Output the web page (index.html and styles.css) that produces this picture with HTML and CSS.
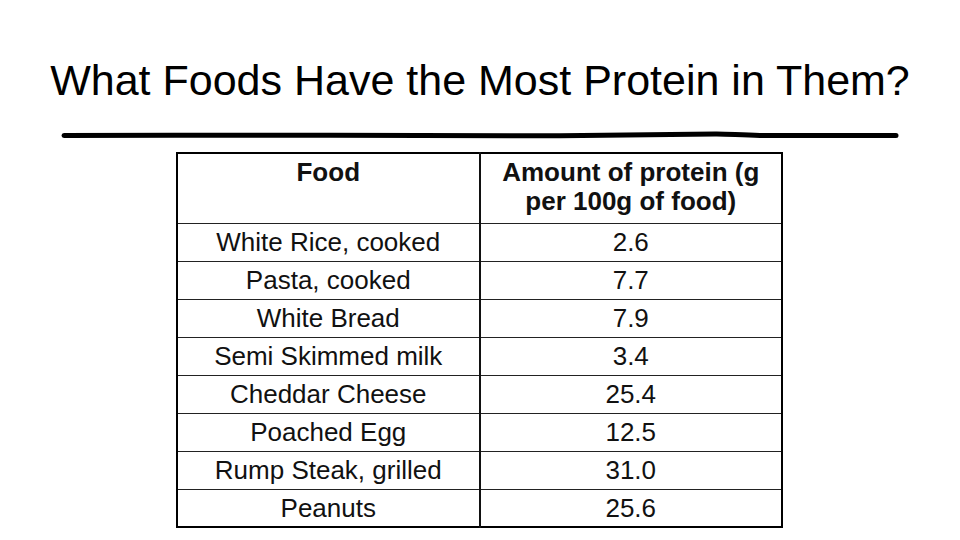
FILE: index.html
```html
<!DOCTYPE html>
<html>
<head>
<meta charset="utf-8">
<link rel="stylesheet" href="styles.css">
</head>
<body>
<div class="slide">
  <h1 class="title">What Foods Have the Most Protein in Them?</h1>
  <svg class="rule" width="960" height="16" viewBox="0 0 960 16">
    <path d="M64 8.5 C150 8 250 8.6 330 8.3 C420 8 500 9.2 560 8.8 C620 8.4 680 7.6 715 7 C728 6.8 740 8.2 760 8.4 C820 8.6 870 8.2 896 8.4" fill="none" stroke="#000" stroke-width="5" stroke-linecap="round"/>
  </svg>
  <table class="data">
    <thead>
      <tr><th>Food</th><th>Amount of protein (g per 100g of food)</th></tr>
    </thead>
    <tbody>
      <tr><td>White Rice, cooked</td><td>2.6</td></tr>
      <tr><td>Pasta, cooked</td><td>7.7</td></tr>
      <tr><td>White Bread</td><td>7.9</td></tr>
      <tr><td>Semi Skimmed milk</td><td>3.4</td></tr>
      <tr><td>Cheddar Cheese</td><td>25.4</td></tr>
      <tr><td>Poached Egg</td><td>12.5</td></tr>
      <tr><td>Rump Steak, grilled</td><td>31.0</td></tr>
      <tr><td>Peanuts</td><td>25.6</td></tr>
    </tbody>
  </table>
</div>
</body>
</html>
```
FILE: styles.css
```css
html, body {
  margin: 0;
  padding: 0;
  background: #fff;
}
.slide {
  width: 960px;
  height: 540px;
  overflow: hidden;
  font-family: "Liberation Sans", Arial, sans-serif;
  color: #000;
}
.title {
  margin: 0;
  padding-top: 54px;
  font-size: 43px;
  line-height: 52px;
  font-weight: normal;
  text-align: center;
  white-space: nowrap;
}
.rule {
  display: block;
  margin-top: 21px;
}
.data {
  margin: 9px 0 0 176px;
  width: 607px;
  border-collapse: collapse;
  border: 2px solid #000;
  table-layout: fixed;
  color: #111;
}
.data th, .data td {
  border: 1px solid #222;
  text-align: center;
  font-size: 26px;
  padding: 0 8px;
}
.data th {
  height: 70px;
  vertical-align: top;
  font-weight: bold;
  line-height: 29px;
  padding-top: 4px;
  box-sizing: border-box;
}
.data td {
  height: 38px;
  line-height: 28px;
  vertical-align: middle;
  box-sizing: border-box;
}
.data th:first-child, .data td:first-child {
  border-right: 2px solid #111;
}
```
